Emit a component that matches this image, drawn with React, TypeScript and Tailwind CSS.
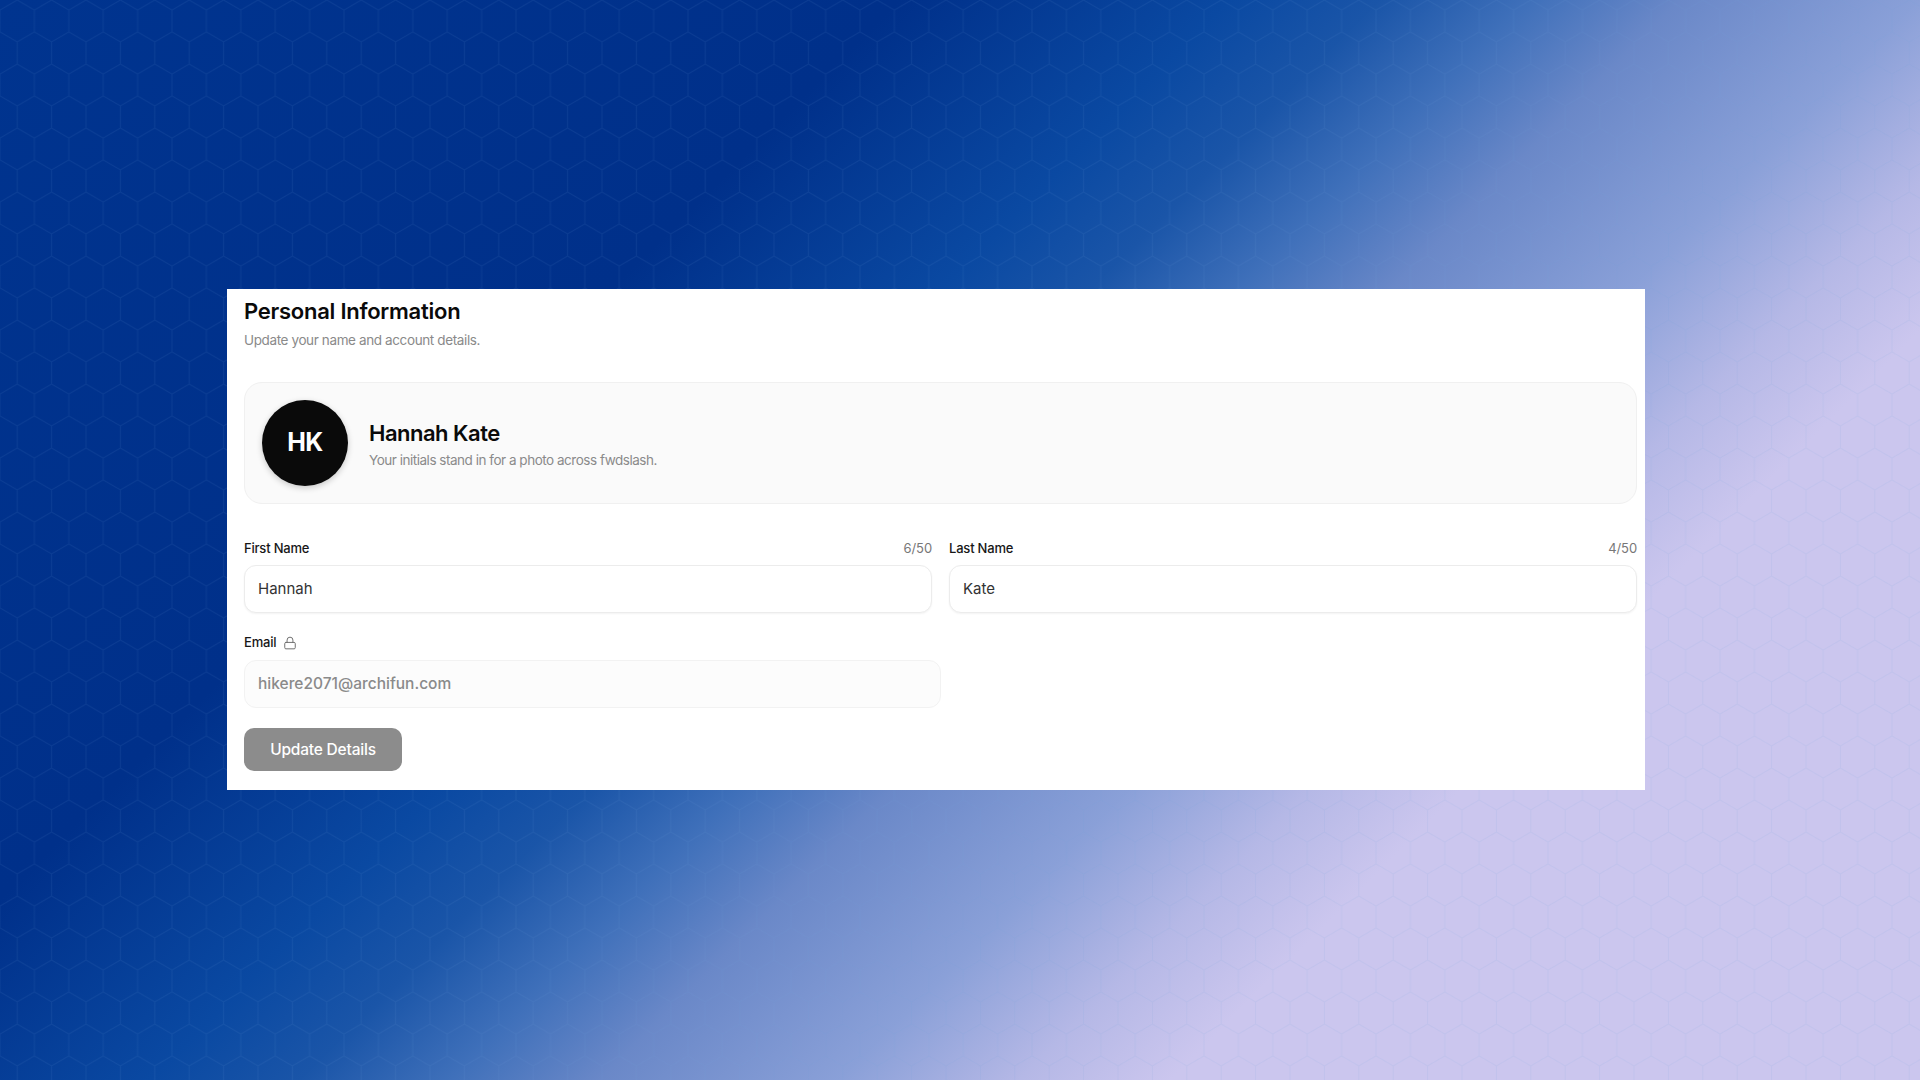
import { Lock } from "lucide-react";

const font = "font-['Inter','Liberation_Sans',sans-serif]";

function HexPattern() {
  return (
    <svg className="absolute inset-0 h-full w-full" aria-hidden="true">
      <defs>
        <pattern id="hex" width="34.4" height="64" patternUnits="userSpaceOnUse">
          <path
            d="M0 10L17.2 0L34.4 10M0 10V32L17.2 42L34.4 32V10M17.2 42V64"
            fill="none"
            stroke="#6f9fe0"
            strokeOpacity="0.1"
            strokeWidth="1"
          />
        </pattern>
      </defs>
      <rect width="100%" height="100%" fill="url(#hex)" />
    </svg>
  );
}

function NameField({ label, count, value }: { label: string; count: string; value: string }) {
  return (
    <div>
      <div className="flex h-5 items-center justify-between">
        <span className="text-[13px] font-medium tracking-[-0.2px] text-[#171717]">{label}</span>
        <span className="text-[13px] tracking-[-0.1px] text-[#777777]">{count}</span>
      </div>
      <div className="mt-[6px] flex h-12 items-center rounded-[12px] border border-[#ececec] bg-white px-[13px] text-[15px] text-[#333333] shadow-[0_1px_2px_rgba(0,0,0,0.05)]">
        {value}
      </div>
    </div>
  );
}

export default function App() {
  return (
    <div
      className={`${font} relative flex h-screen w-full items-center overflow-hidden bg-[linear-gradient(135deg,#00348f_0%,#00308a_30%,#0a49a2_41%,#1a55a8_46%,#3f70ba_51%,#6a88c8_56%,#8aa0d8_64%,#b5b8e6_70%,#cbc6ee_75%,#cbc6ee_100%)] pb-px pl-[227px]`}
    >
      <HexPattern />
      <div className="relative h-[501px] w-[1418px] bg-white pl-[17px] pr-2 pt-2">
        <h2 className="text-[22px] leading-7 font-semibold tracking-[-0.25px] text-[#0a0a0a]">
          Personal Information
        </h2>
        <p className="mt-[5px] text-[13.5px] leading-5 tracking-[-0.38px] text-[#8a8a8a]">
          Update your name and account details.
        </p>

        <div className="mt-8 flex h-[122px] items-center gap-[21px] rounded-[18px] border border-[#f0f0f0] bg-[#fafafa] px-[17px]">
          <div className="flex h-[86px] w-[86px] items-center justify-center rounded-full bg-[#0a0a0a] text-[25px] font-bold tracking-[-0.5px] text-white shadow-[0_2px_6px_rgba(0,0,0,0.2)]">
            HK
          </div>
          <div className="pt-[3px]">
            <div className="text-[22px] leading-7 font-semibold tracking-[-0.5px] text-[#0a0a0a]">
              Hannah Kate
            </div>
            <div className="mt-[3px] text-[13.5px] leading-5 tracking-[-0.48px] text-[#8a8a8a]">
              Your initials stand in for a photo across fwdslash.
            </div>
          </div>
        </div>

        <div className="mt-[35px] grid grid-cols-2 gap-[17px]">
          <NameField label="First Name" count="6/50" value="Hannah" />
          <NameField label="Last Name" count="4/50" value="Kate" />
        </div>

        <div className="mt-5 flex h-5 items-center gap-[7px] text-[13px] font-medium tracking-[-0.2px] text-[#171717]">
          Email
          <Lock size={14} strokeWidth={1.7} className="mb-px text-[#6f6f6f]" />
        </div>
        <div className="mt-[7px] flex h-12 w-[697px] items-center rounded-[12px] border border-[#f2f2f2] bg-[#fcfcfc] px-[13px] text-[15.5px] font-medium text-[#8a8a8a]">
          hikere2071@archifun.com
        </div>

        <button className="mt-5 h-[43px] w-[158px] rounded-[10px] bg-[#8c8c8c] text-[15.5px] font-medium tracking-[-0.2px] text-white">
          Update Details
        </button>
      </div>
    </div>
  );
}
